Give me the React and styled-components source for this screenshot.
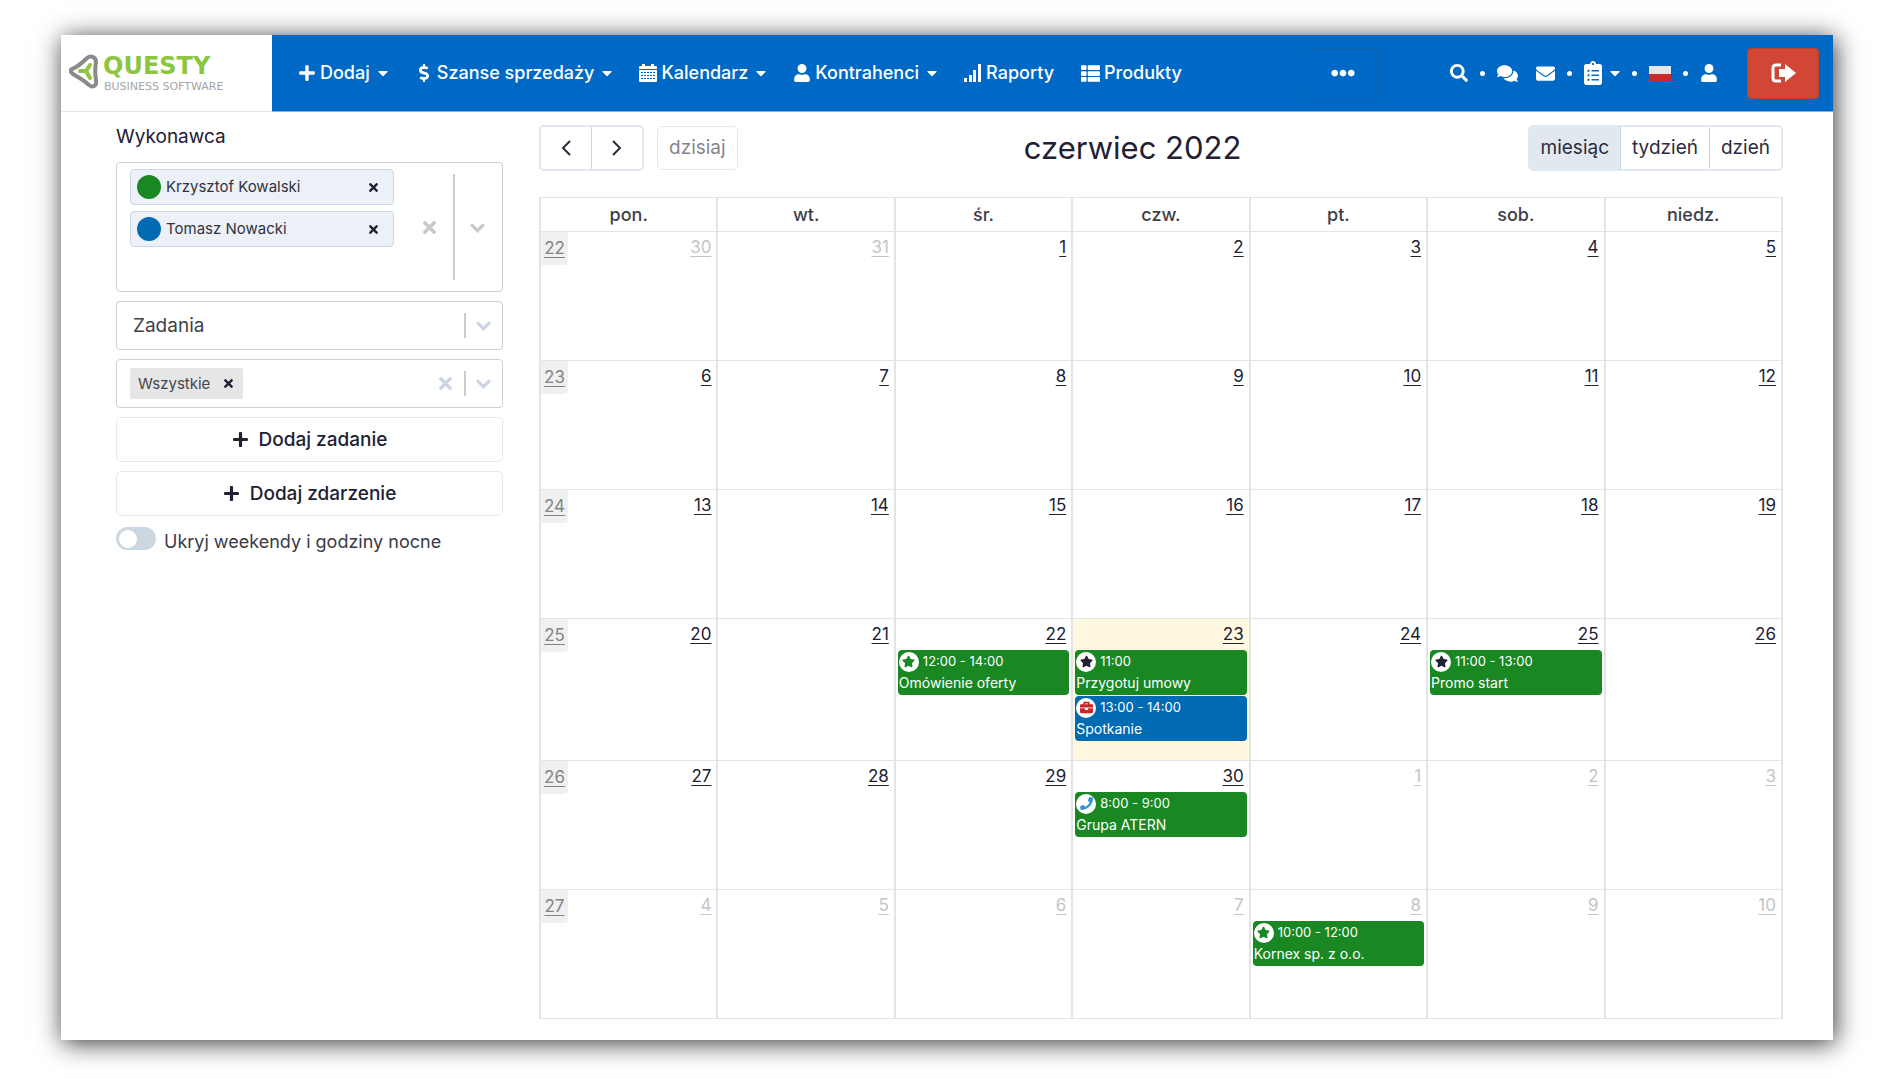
import React, { useState } from "react";
import styled, { createGlobalStyle } from "styled-components";
import {
  FaBriefcase,
  FaCaretDown,
  FaClipboardList,
  FaComments,
  FaDollarSign,
  FaEllipsisH,
  FaEnvelope,
  FaPhone,
  FaPlus,
  FaSearch,
  FaStar,
  FaThList,
  FaTimes,
  FaUser,
} from "react-icons/fa";

const ink = "#212133";
const green = "#198822";
const blue = "#006ab3";

const GlobalStyle = createGlobalStyle`
  * {
    box-sizing: border-box;
  }
  body {
    margin: 0;
    background: #fff;
    color: ${ink};
    font-family: Inter, "Open Sans", sans-serif;
    font-size: 17px;
    line-height: 24px;
  }
  button, input, select {
    font: inherit;
    color: inherit;
  }
  button {
    padding: 0;
    border: 0;
    background: none;
    cursor: pointer;
  }
`;

const Page = styled.div`
  padding: 35px 63px 37px 61px;
`;

const Window = styled.div`
  background: #fff;
  box-shadow: 2px 3px 24px rgba(0, 0, 0, 0.8);
`;

const Header = styled.header`
  display: flex;
  height: 77px;
`;

const LogoLink = styled.a`
  display: flex;
  align-items: center;
  flex: 0 0 211px;
  padding: 0 0 2px 8px;
  border-bottom: 1px solid #e6e6e6;
`;

const Bar = styled.div`
  display: flex;
  align-items: center;
  flex: 1;
  padding: 0 14px 0 26px;
  color: #fff;
  background: #0069c5;
  border-bottom: 1px solid #7ab6ea;
`;

const Nav = styled.nav`
  display: flex;
  flex: 1;
  gap: 27px;
`;

const NavItem = styled.a`
  display: flex;
  align-items: center;
  gap: 4px;
  color: #fff;
  font-size: 18px;
  font-weight: 500;
  text-decoration: none;
  white-space: nowrap;
`;

const Caret = styled(FaCaretDown)`
  width: 10px;
  height: 16px;
  margin-left: 4px;
`;

const MoreButton = styled.button`
  display: flex;
  align-items: center;
  justify-content: center;
  width: 72px;
  height: 51px;
  margin-right: 71px;
  border: 1px solid #0a61ae;
  border-radius: 4px;
`;

const Tools = styled.div`
  display: flex;
  align-items: center;
  gap: 12px;
  margin-right: 29px;
`;

const ToolPair = styled.div`
  display: flex;
  align-items: center;
  gap: 18px;
`;

const ToolButton = styled.button`
  display: flex;
  align-items: center;
  gap: 4px;
`;

const ClipboardIcon = styled(FaClipboardList)`
  width: 18px;
  height: 24px;
`;

const Dot = styled.span`
  width: 5px;
  height: 5px;
  border-radius: 50%;
  background: #fff;
`;

const LogoutButton = styled(MoreButton)`
  margin: 0;
  border-color: #b8402f;
  background: #d14634;
`;

const Main = styled.main`
  display: flex;
  gap: 36px;
  padding: 13px 50px 21px 55px;
`;

const Sidebar = styled.aside`
  display: flex;
  flex-direction: column;
  gap: 9px;
  flex: 0 0 387px;
`;

const FieldLabel = styled.label`
  margin-bottom: 4px;
  font-size: 19px;
`;

const Field = styled.div`
  display: flex;
  align-items: center;
  min-height: ${(props) => (props.$tall ? 130 : 49)}px;
  padding: 0 ${(props) => (props.$tall ? 16 : 10)}px 0 13px;
  border: 1px solid #cfcfcf;
  border-radius: 4px;
  color: ${(props) => (props.$tall ? "#c8c8c8" : "#ccd6e2")};
`;

const FieldSelect = styled.select`
  flex: 1;
  padding: 0 3px;
  border: 0;
  appearance: none;
  background: none;
  color: #3f3f48;
  font-size: 19px;
`;

const Separator = styled.span`
  align-self: stretch;
  width: 2px;
  margin: 11px ${(props) => (props.$wide ? 14 : 9)}px;
  background: #ccc;
`;

const People = styled.div`
  display: flex;
  flex-direction: column;
  align-self: flex-start;
  gap: 6px;
  flex: 0 0 264px;
  margin-right: auto;
  padding-top: 6px;
`;

const Person = styled.div`
  display: flex;
  align-items: center;
  gap: 5px;
  height: 36px;
  padding: 0 13px 0 6px;
  border: 1px solid #cbd7e6;
  border-radius: 4px;
  background: #ecf1f8;
  color: #33333f;
  font-size: 15px;
`;

const Swatch = styled.span`
  width: 24px;
  height: 24px;
  border-radius: 50%;
  background: ${(props) => props.$color};
`;

const RemoveButton = styled.button`
  display: flex;
  margin-left: auto;
  color: ${ink};
`;

const SearchInput = styled.input`
  width: 100%;
  height: 28px;
  padding: 0 3px;
  border: 0;
  outline: 0;
  background: none;
`;

const InlineSearch = styled(SearchInput)`
  flex: 1;
  width: 0;
`;

const Tag = styled.div`
  display: flex;
  align-items: center;
  gap: 12px;
  height: 31px;
  padding: 0 8px;
  border-radius: 2px;
  background: #e6e6e6;
  color: #45454d;
  font-size: 15px;
`;

const IconButton = styled.button`
  display: flex;
  color: inherit;
`;

const AddButton = styled.button`
  display: flex;
  align-items: center;
  justify-content: center;
  gap: 10px;
  height: 45px;
  border: 1px solid #e3e9f1;
  border-radius: 5px;
  font-size: 19px;
  font-weight: 500;
`;

const SwitchLabel = styled.label`
  display: flex;
  align-items: flex-start;
  gap: 8px;
  padding-top: 2px;
  color: #3a3a46;
  font-size: 18px;
  line-height: 30px;
`;

const Switch = styled.input`
  display: flex;
  align-items: center;
  width: 40px;
  height: 23px;
  margin: 0;
  padding: 0 3px;
  appearance: none;
  border-radius: 12px;
  background: #cdd7e2;

  &::before {
    content: "";
    width: 18px;
    height: 18px;
    border-radius: 50%;
    background: #fff;
  }
  &:checked {
    justify-content: flex-end;
    background: ${blue};
  }
`;

const Calendar = styled.section`
  flex: 1;
  min-width: 0;
`;

const Toolbar = styled.div`
  display: flex;
  align-items: center;
  justify-content: space-between;
  height: 46px;
  margin-bottom: 26px;
`;

const ToolbarSide = styled.div`
  display: flex;
  align-items: center;
  gap: 13px;
`;

const ButtonGroup = styled.div`
  display: flex;
  border: ${(props) => (props.$thin ? 1 : 2)}px solid #e1e8f1;
  border-radius: 5px;
  overflow: hidden;
`;

const GroupButton = styled.button`
  display: flex;
  align-items: center;
  justify-content: center;
  height: 42px;
  padding: 0 ${(props) => (props.$arrow ? 17 : 11)}px;
  background: ${(props) => (props.$active ? "#e1e8f0" : "#fff")};
  color: #2c2c3a;
  font-size: 19px;

  & + & {
    border-left: 1px solid #cbd5e3;
  }
  &:disabled {
    color: #85858d;
  }
`;

const Title = styled.h2`
  margin: 0;
  font-size: 31px;
  font-weight: 400;
  line-height: 36px;
`;

const Month = styled.table`
  width: 100%;
  table-layout: fixed;
  border-collapse: collapse;
`;

const DayHead = styled.th`
  height: 34px;
  padding: 0;
  border: solid #e4e4e4;
  border-width: 1px 2px;
  color: #3e3e4a;
  font-size: 18px;
  font-weight: 500;
`;

const DayCell = styled.td`
  height: ${(props) => (props.$busy ? 142 : 129)}px;
  padding: 0 2px;
  border: solid #e4e4e4;
  border-width: 1px 2px;
  vertical-align: top;
  background: ${(props) => (props.$today ? "#fff7e0" : "#fff")};
`;

const DayTop = styled.div`
  display: flex;
  justify-content: space-between;
  height: 31px;
`;

const DayLink = styled.a`
  margin: 3px 3px 0 auto;
  color: ${(props) => (props.$other ? "#c4c4c8" : ink)};
  text-underline-offset: 3px;
`;

const WeekLink = styled.a`
  width: 27px;
  height: 33px;
  margin-left: -2px;
  padding-top: 4px;
  border-radius: 0 0 4px 0;
  background: #f0f0f0;
  color: #83838a;
  text-align: center;
  text-underline-offset: 3px;
`;

const Event = styled.a`
  display: block;
  height: 45px;
  padding: 1px;
  border-radius: 4px;
  background: ${(props) => props.$color};
  color: #fff;
  font-size: 14px;
  line-height: 21px;
  text-decoration: none;
  white-space: nowrap;

  & + & {
    margin-top: 1px;
  }
`;

const EventTime = styled.div`
  display: flex;
  align-items: center;
  gap: 4px;
  font-size: 13px;
`;

const Badge = styled.span`
  display: flex;
  align-items: center;
  justify-content: center;
  width: 20px;
  height: 20px;
  border-radius: 50%;
  background: #fff;
  color: ${(props) => props.$color};
`;

const navItems = [
  { label: "Dodaj", icon: FaPlus, size: 18, menu: true },
  { label: "Szanse sprzedaży", icon: FaDollarSign, size: 18, menu: true },
  { label: "Kalendarz", icon: CalendarIcon, size: 18, menu: true },
  { label: "Kontrahenci", icon: FaUser, size: 18, menu: true },
  { label: "Raporty", icon: SignalIcon, size: 18 },
  { label: "Produkty", icon: FaThList, size: 19 },
];

const people = [
  { name: "Krzysztof Kowalski", color: green },
  { name: "Tomasz Nowacki", color: blue },
];

const dayNames = ["pon.", "wt.", "śr.", "czw.", "pt.", "sob.", "niedz."];

const weeks = [
  { number: 22, days: [30, 31, 1, 2, 3, 4, 5] },
  { number: 23, days: [6, 7, 8, 9, 10, 11, 12] },
  { number: 24, days: [13, 14, 15, 16, 17, 18, 19] },
  { number: 25, days: [20, 21, 22, 23, 24, 25, 26] },
  { number: 26, days: [27, 28, 29, 30, 1, 2, 3] },
  { number: 27, days: [4, 5, 6, 7, 8, 9, 10] },
];

// keyed by "week-day"
const events = {
  "25-22": [
    { time: "12:00 - 14:00", title: "Omówienie oferty", color: green, icon: FaStar, tint: green },
  ],
  "25-23": [
    { time: "11:00", title: "Przygotuj umowy", color: green, icon: FaStar, tint: ink },
    { time: "13:00 - 14:00", title: "Spotkanie", color: blue, icon: FaBriefcase, tint: "#c62828" },
  ],
  "25-25": [
    { time: "11:00 - 13:00", title: "Promo start", color: green, icon: FaStar, tint: ink },
  ],
  "26-30": [
    { time: "8:00 - 9:00", title: "Grupa ATERN", color: green, icon: FaPhone, tint: "#2f95dc" },
  ],
  "27-8": [
    { time: "10:00 - 12:00", title: "Kornex sp. z o.o.", color: green, icon: FaStar, tint: green },
  ],
};

function isOtherMonth(week, day) {
  return (week === 22 && day > 7) || (week === 26 && day < 7) || week === 27;
}

function Logo() {
  return (
    <svg width="190" height="40" viewBox="0 0 190 40" role="img" aria-label="Questy Business Software">
      <path
        d="M3 17 C9 15 14 10 18 6 C22 3 27 5 27 10 C26 16 26 22 27 28 C28 34 24 36 20 33 C15 28 9 25 4 22 C1 20 1 18 3 17 Z"
        fill="none"
        stroke="#8a8a8a"
        strokeWidth="4"
      />
      <path
        d="M11 19 H17 L21 13 M17 19 L21 26"
        fill="none"
        stroke="#8cc63f"
        strokeWidth="4"
        strokeLinecap="round"
      />
      <text x="34" y="22" fill="#8cc63f" fontFamily="DejaVu Sans" fontSize="24" fontWeight="700">
        QUESTY
      </text>
      <text x="35" y="38" fill="#a5a5a5" fontFamily="DejaVu Sans" fontSize="11">
        BUSINESS SOFTWARE
      </text>
    </svg>
  );
}

function CalendarIcon({ size }) {
  return (
    <svg width={size} height={size} viewBox="0 0 18 18" aria-hidden="true">
      <path d="M0 3 Q0 2 1 2 H3 V0 H6 V2 H12 V0 H15 V2 H17 Q18 2 18 3 V5 H0 Z" fill="#fff" />
      <path d="M0 6 H18 V17 Q18 18 17 18 H1 Q0 18 0 17 Z" fill="#fff" />
      <path d="M2 8.5 H16 M2 11.5 H16 M2 14.5 H16" stroke="#0069c5" strokeDasharray="2 1" />
    </svg>
  );
}

function SignalIcon({ size }) {
  return (
    <svg width={size} height={size} viewBox="0 0 18 18" aria-hidden="true">
      <path d="M0 14 H3 V18 H0 Z M5 11 H8 V18 H5 Z M9 6 H12 V18 H9 Z M14 0 H17 V18 H14 Z" fill="#fff" />
    </svg>
  );
}

function LogoutIcon() {
  return (
    <svg width="25" height="20" viewBox="0 0 25 20" aria-hidden="true">
      <path d="M10 2 H5 Q2 2 2 5 V15 Q2 18 5 18 H10" fill="none" stroke="#fff" strokeWidth="3" />
      <path d="M8 6 H14 V1 L25 10 L14 19 V14 H8 Z" fill="#fff" />
    </svg>
  );
}

function Flag() {
  return (
    <svg width="22" height="15" viewBox="0 0 22 15" aria-hidden="true">
      <rect width="22" height="8" fill="#e6e6e6" />
      <rect y="8" width="22" height="7" fill="#c92a2a" />
    </svg>
  );
}

function Chevron({ direction = "down", size = 16, width = 3 }) {
  const paths = {
    down: "M2 5 L8 11 L14 5",
    left: "M12 1 L5 8 L12 15",
    right: "M4 1 L11 8 L4 15",
  };
  return (
    <svg width={size} height={size} viewBox="0 0 16 16" aria-hidden="true">
      <path d={paths[direction]} fill="none" stroke="currentColor" strokeWidth={width} />
    </svg>
  );
}

function MonthTable() {
  return (
    <Month>
      <thead>
        <tr>
          {dayNames.map((name) => (
            <DayHead key={name} scope="col">
              {name}
            </DayHead>
          ))}
        </tr>
      </thead>
      <tbody>
        {weeks.map((week) => (
          <tr key={week.number}>
            {week.days.map((day, index) => (
              <DayCell
                key={day}
                $busy={week.number === 25}
                $today={week.number === 25 && day === 23}
              >
                <DayTop>
                  {index === 0 && <WeekLink href="#">{week.number}</WeekLink>}
                  <DayLink href="#" $other={isOtherMonth(week.number, day)}>
                    {day}
                  </DayLink>
                </DayTop>
                {(events[`${week.number}-${day}`] || []).map((event) => (
                  <Event key={event.title} href="#" $color={event.color}>
                    <EventTime>
                      <Badge $color={event.tint}>
                        <event.icon size={13} />
                      </Badge>
                      {event.time}
                    </EventTime>
                    {event.title}
                  </Event>
                ))}
              </DayCell>
            ))}
          </tr>
        ))}
      </tbody>
    </Month>
  );
}

function App() {
  const [hideWeekends, setHideWeekends] = useState(false);
  const [view, setView] = useState("miesiąc");

  return (
    <Page>
      <GlobalStyle />
      <Window>
        <Header>
          <LogoLink href="#">
            <Logo />
          </LogoLink>
          <Bar>
            <Nav>
              {navItems.map((item) => (
                <NavItem key={item.label} href="#">
                  <item.icon size={item.size} />
                  {item.label}
                  {item.menu && <Caret />}
                </NavItem>
              ))}
            </Nav>
            <MoreButton aria-label="Więcej">
              <FaEllipsisH size={24} />
            </MoreButton>
            <Tools>
              <ToolButton aria-label="Szukaj">
                <FaSearch size={18} />
              </ToolButton>
              <Dot />
              <ToolPair>
                <ToolButton aria-label="Czat">
                  <FaComments size={21} />
                </ToolButton>
                <ToolButton aria-label="Poczta">
                  <FaEnvelope size={19} />
                </ToolButton>
              </ToolPair>
              <Dot />
              <ToolButton aria-label="Zadania">
                <ClipboardIcon />
                <Caret />
              </ToolButton>
              <Dot />
              <ToolButton aria-label="Język">
                <Flag />
              </ToolButton>
              <Dot />
              <ToolButton aria-label="Konto">
                <FaUser size={18} />
              </ToolButton>
            </Tools>
            <LogoutButton aria-label="Wyloguj">
              <LogoutIcon />
            </LogoutButton>
          </Bar>
        </Header>
        <Main>
          <Sidebar>
            <FieldLabel htmlFor="assignee">Wykonawca</FieldLabel>
            <Field $tall>
              <People>
                {people.map((person) => (
                  <Person key={person.name}>
                    <Swatch $color={person.color} />
                    {person.name}
                    <RemoveButton aria-label={`Usuń ${person.name}`}>
                      <FaTimes size={13} />
                    </RemoveButton>
                  </Person>
                ))}
                <SearchInput id="assignee" />
              </People>
              <IconButton aria-label="Wyczyść">
                <FaTimes size={19} />
              </IconButton>
              <Separator $wide />
              <IconButton aria-label="Rozwiń">
                <Chevron size={17} />
              </IconButton>
            </Field>
            <Field>
              <FieldSelect aria-label="Rodzaj">
                <option>Zadania</option>
              </FieldSelect>
              <Separator />
              <Chevron size={17} />
            </Field>
            <Field>
              <Tag>
                Wszystkie
                <RemoveButton aria-label="Usuń Wszystkie">
                  <FaTimes size={13} />
                </RemoveButton>
              </Tag>
              <InlineSearch aria-label="Status" />
              <IconButton aria-label="Wyczyść">
                <FaTimes size={19} />
              </IconButton>
              <Separator />
              <IconButton aria-label="Rozwiń">
                <Chevron size={17} />
              </IconButton>
            </Field>
            <AddButton>
              <FaPlus size={17} />
              Dodaj zadanie
            </AddButton>
            <AddButton>
              <FaPlus size={17} />
              Dodaj zdarzenie
            </AddButton>
            <SwitchLabel>
              <Switch
                type="checkbox"
                checked={hideWeekends}
                onChange={() => setHideWeekends(!hideWeekends)}
              />
              Ukryj weekendy i godziny nocne
            </SwitchLabel>
          </Sidebar>
          <Calendar>
            <Toolbar>
              <ToolbarSide>
                <ButtonGroup>
                  <GroupButton $arrow aria-label="Poprzedni">
                    <Chevron direction="left" width={2} />
                  </GroupButton>
                  <GroupButton $arrow aria-label="Następny">
                    <Chevron direction="right" width={2} />
                  </GroupButton>
                </ButtonGroup>
                <ButtonGroup $thin>
                  <GroupButton disabled>dzisiaj</GroupButton>
                </ButtonGroup>
              </ToolbarSide>
              <Title>czerwiec 2022</Title>
              <ButtonGroup>
                {["miesiąc", "tydzień", "dzień"].map((name) => (
                  <GroupButton key={name} $active={view === name} onClick={() => setView(name)}>
                    {name}
                  </GroupButton>
                ))}
              </ButtonGroup>
            </Toolbar>
            <MonthTable />
          </Calendar>
        </Main>
      </Window>
    </Page>
  );
}

export default App;
